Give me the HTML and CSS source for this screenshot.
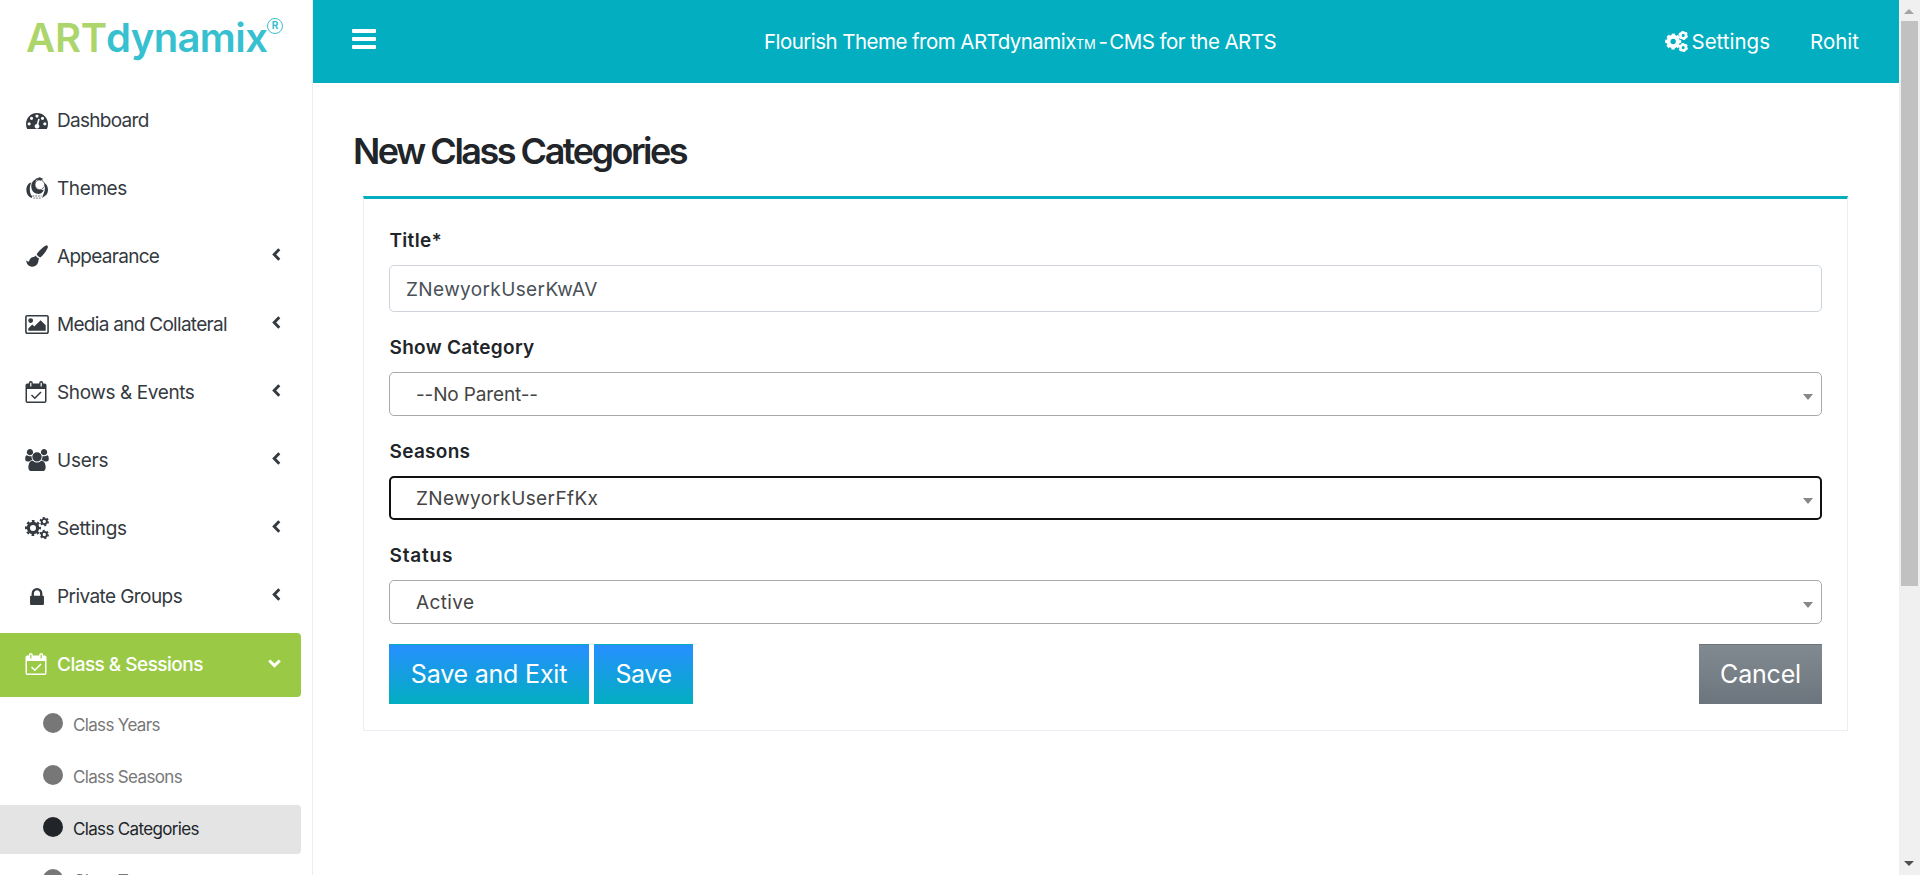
FILE: index.html
```html
<!DOCTYPE html>
<html lang="en">
<head>
<meta charset="utf-8">
<title>New Class Categories</title>
<link rel="stylesheet" href="styles.css">
</head>
<body>
<svg class="defs" width="0" height="0" aria-hidden="true">
  <symbol id="i-dash" viewBox="0 128 1792 1408"><path d="M384 1152q0-53-37.5-90.5t-90.5-37.5-90.5 37.5-37.5 90.5 37.5 90.5 90.5 37.5 90.5-37.5 37.5-90.5zm192-448q0-53-37.5-90.5t-90.5-37.5-90.5 37.5-37.5 90.5 37.5 90.5 90.5 37.5 90.5-37.5 37.5-90.5zm428 481l101-382q6-26-7.5-48.5t-38.5-29.5-48 6.5-30 39.5l-101 382q-60 5-107 43.5t-63 98.5q-20 77 20 146t117 89 146-20 89-117q16-60-6-117t-72-91zm660-33q0-53-37.5-90.5t-90.5-37.5-90.5 37.5-37.5 90.5 37.5 90.5 90.5 37.5 90.5-37.5 37.5-90.5zm-640-640q0-53-37.5-90.5t-90.5-37.5-90.5 37.5-37.5 90.5 37.5 90.5 90.5 37.5 90.5-37.5 37.5-90.5zm448 192q0-53-37.5-90.5t-90.5-37.5-90.5 37.5-37.5 90.5 37.5 90.5 90.5 37.5 90.5-37.5 37.5-90.5zm320 448q0 261-141 483-19 29-54 29h-1402q-35 0-54-29-141-221-141-483 0-182 71-348t191-286 286-191 348-71 348 71 286 191 191 286 71 348z"/></symbol>
  <symbol id="i-theme" viewBox="0 0 24 24"><path d="M6 6C1.500 6.500-.5 12 .8 17c.7 2.700 2.200 4.800 5.200 6l1-1.800C3.800 18.500 3 11 6 6z"/><path d="M5.800 11C5.500 5 9 2.300 13 1.500c-2.500 2-3.500 4.500-3 8s4.500 5.800 9.500 4.300c-1.300 3.500-4.500 5.200-7.500 4.500C8.300 17.700 6 15 5.800 11z"/><path d="M9.500 2.500L15 .3l4 2-3 1.200z"/><circle cx="15" cy="8.500" r="5.300" fill="none" stroke="currentColor" stroke-width=".8"/><path d="M20 6.500c4.500 2 5.200 9.500 2 13.200l-4.500 3.100c1.200-4.300 4.700-8.500 2.500-16.300z"/><path d="M7 20.700h10M8 23h8" fill="none" stroke="currentColor" stroke-width=".8" stroke-dasharray="2 1"/></symbol>
  <symbol id="i-brush" viewBox="0 0 24 24"><path d="M22.300.3c1.500.2 1.900 1.600 1.300 3.100-1.200 3-5 8-8.100 10.300-1-.2-3.500-2.400-3.900-3.500C13.500 7 18 2.500 22.300.3z"/><path d="M10.700 11.500c.5 1.400 2 2.800 3.600 3.200-.6 1-.6 1.700-.8 3-.4 3.400-3.300 6.100-7 5.900-3.800-.2-6-3-6.300-6.700 1 .6 2 1.700 3 1 .7-.7.6-2.500 2.200-3.700 1.900-1.400 3.800-.8 5.300-2.700z"/></symbol>
  <symbol id="i-image" viewBox="-64 128 1920 1536"><path d="M576 576q0 80-56 136t-136 56-136-56-56-136 56-136 136-56 136 56 56 136zm1024 384v448h-1408v-192l320-320 160 160 512-512zm96-704h-1600q-13 0-22.500 9.500t-9.500 22.500v1216q0 13 9.500 22.500t22.500 9.500h1600q13 0 22.500-9.500t9.500-22.500v-1216q0-13-9.500-22.500t-22.500-9.500zm160 32v1216q0 66-47 113t-113 47h-1600q-66 0-113-47t-47-113v-1216q0-66 47-113t113-47h1600q66 0 113 47t47 113z"/></symbol>
  <symbol id="i-cal" viewBox="0 0 21 22"><path fill-rule="evenodd" d="M1.800 2.500H3.300V2a2 2 0 0 1 4 0V2.500h6.400V2a2 2 0 0 1 4 0V2.500h1.500A1.800 1.800 0 0 1 21 4.300V20.200A1.800 1.800 0 0 1 19.200 22H1.800A1.800 1.800 0 0 1 0 20.200V4.300A1.800 1.800 0 0 1 1.800 2.500zM1.500 8V20.500h18V8zM4.700 1.700V5.500h1.200V1.700zM15.100 1.700V5.500h1.200V1.700z"/><path d="M6 14l3.300 3.200L15.500 11" fill="none" stroke="currentColor" stroke-width="1.500"/></symbol>
  <symbol id="i-users" viewBox="64 0 1920 1792"><path d="M657 896q-162 5-265 128h-134q-82 0-138-40.500t-56-118.500q0-353 124-353 6 0 43.500 21t97.500 42.500 119 21.500q67 0 133-23-5 37-5 66 0 139 81 256zm1071 637q0 120-73 189.500t-194 69.500h-874q-121 0-194-69.500t-73-189.500q0-53 3.500-103.500t14-109 26.500-108.500 43-97.500 62-81 85.500-53.500 111.500-20q10 0 43 21.500t73 48 107 48 135 21.500 135-21.500 107-48 73-48 43-21.500q61 0 111.500 20t85.500 53.500 62 81 43 97.500 26.500 108.500 14 109 3.500 103.500zm-1024-1277q0 106-75 181t-181 75-181-75-75-181 75-181 181-75 181 75 75 181zm704 384q0 159-112.500 271.500t-271.500 112.500-271.500-112.500-112.500-271.500 112.500-271.500 271.500-112.500 271.500 112.500 112.500 271.500zm576 225q0 78-56 118.500t-138 40.500h-134q-103-123-265-128 81-117 81-256 0-29-5-66 66 23 133 23 59 0 119-21.500t97.500-42.500 43.500-21q124 0 124 353zm-128-609q0 106-75 181t-181 75-181-75-75-181 75-181 181-75 181 75 75 181z"/></symbol>
  <symbol id="i-gears" viewBox="0 0 24 22"><g fill="none" stroke="currentColor"><circle cx="8" cy="11" r="4.600" stroke-width="3.200"/><circle cx="8" cy="11" r="6.900" stroke-width="2.200" stroke-dasharray="2.710 2.710" stroke-dashoffset="1.350"/><circle cx="19.300" cy="4.500" r="2.600" stroke-width="1.900"/><circle cx="19.300" cy="4.500" r="3.900" stroke-width="1.600" stroke-dasharray="2 2.080"/><circle cx="19.300" cy="17.500" r="2.600" stroke-width="1.900"/><circle cx="19.300" cy="17.500" r="3.900" stroke-width="1.600" stroke-dasharray="2 2.080"/></g></symbol>
  <symbol id="i-gears-bold" viewBox="0 0 24 22"><g fill="none" stroke="currentColor"><circle cx="8.500" cy="11" r="4.900" stroke-width="4.200"/><circle cx="8.500" cy="11" r="7.200" stroke-width="2.400" stroke-dasharray="3.400 2.250" stroke-dashoffset="1.700"/><circle cx="19" cy="4.600" r="2.900" stroke-width="2.600"/><circle cx="19" cy="4.600" r="4.200" stroke-width="1.500" stroke-dasharray="2.500 1.900"/><circle cx="19" cy="17.400" r="2.900" stroke-width="2.600"/><circle cx="19" cy="17.400" r="4.200" stroke-width="1.500" stroke-dasharray="2.500 1.900"/></g></symbol>
  <symbol id="i-lock" viewBox="320 128 1152 1408"><path d="M640 768h512v-192q0-106-75-181t-181-75-181 75-75 181v192zm832 96v576q0 40-28 68t-68 28h-960q-40 0-68-28t-28-68v-576q0-40 28-68t68-28h32v-192q0-184 132-316t316-132 316 132 132 316v192h32q40 0 68 28t28 68z"/></symbol>
  <symbol id="i-left" viewBox="0 0 9 13"><path d="M7.300 1.300L2.200 6.500l5.100 5.200" fill="none" stroke="currentColor" stroke-width="2.900"/></symbol>
  <symbol id="i-down" viewBox="0 0 13 9"><path d="M1.200 1.500L6.500 6.600l5.300-5.100" fill="none" stroke="currentColor" stroke-width="3"/></symbol>
</svg>
<div class="app">
  <aside class="sidebar">
    <div class="logo"><span class="logo-art">ART</span><span class="logo-dyn">dynamix</span><span class="logo-reg">R</span></div>
    <nav class="nav">
      <a class="item"><span class="ico"><svg class="idash"><use href="#i-dash"/></svg></span><span class="text tight">Dashboard</span></a>
      <a class="item"><span class="ico"><svg class="itheme"><use href="#i-theme"/></svg></span><span class="text">Themes</span></a>
      <a class="item"><span class="ico"><svg class="ibrush"><use href="#i-brush"/></svg></span><span class="text tight">Appearance</span><svg class="chev"><use href="#i-left"/></svg></a>
      <a class="item"><span class="ico"><svg class="iimg"><use href="#i-image"/></svg></span><span class="text tight">Media and Collateral</span><svg class="chev"><use href="#i-left"/></svg></a>
      <a class="item"><span class="ico start"><svg class="ical"><use href="#i-cal"/></svg></span><span class="text">Shows &amp; Events</span><svg class="chev"><use href="#i-left"/></svg></a>
      <a class="item"><span class="ico"><svg class="iusers"><use href="#i-users"/></svg></span><span class="text loose">Users</span><svg class="chev"><use href="#i-left"/></svg></a>
      <a class="item"><span class="ico"><svg class="igears"><use href="#i-gears"/></svg></span><span class="text">Settings</span><svg class="chev"><use href="#i-left"/></svg></a>
      <a class="item"><span class="ico"><svg class="ilock"><use href="#i-lock"/></svg></span><span class="text mid">Private Groups</span><svg class="chev"><use href="#i-left"/></svg></a>
      <a class="item active"><span class="ico start"><svg class="ical"><use href="#i-cal"/></svg></span><span class="text">Class &amp; Sessions</span><svg class="chev down"><use href="#i-down"/></svg></a>
      <div class="sub">
        <a class="subitem"><i class="dot"></i><span>Class Years</span></a>
        <a class="subitem"><i class="dot"></i><span>Class Seasons</span></a>
        <a class="subitem current"><i class="dot"></i><span>Class Categories</span></a>
        <a class="subitem"><i class="dot"></i><span>Class Types</span></a>
      </div>
    </nav>
  </aside>
  <div class="page">
    <header class="topbar">
      <button class="burger" aria-label="Menu"><i></i><i></i><i></i></button>
      <div class="tagline">Flourish Theme from ARTdynamix<small>TM</small><span class="dash">-</span>CMS for the ARTS</div>
      <div class="userbar"><svg class="topgears"><use href="#i-gears-bold"/></svg><span>Settings</span><span class="user">Rohit</span></div>
    </header>
    <main class="main">
      <h1>New Class Categories</h1>
      <form class="card">
        <label>Title*</label>
        <div class="field input">ZNewyorkUserKwAV</div>
        <label>Show Category</label>
        <div class="field select parent">--No Parent--</div>
        <label>Seasons</label>
        <div class="field select focus">ZNewyorkUserFfKx</div>
        <label class="status">Status</label>
        <div class="field select">Active</div>
        <div class="actions">
          <button type="button" class="btn wide">Save and Exit</button>
          <button type="button" class="btn short">Save</button>
          <button type="button" class="btn cancel">Cancel</button>
        </div>
      </form>
    </main>
  </div>
  <div class="scroll"><i class="up"></i><i class="thumb"></i><i class="dn"></i></div>
</div>
</body>
</html>
```
FILE: styles.css
```css
* { box-sizing: border-box; }
body { margin: 0; height: 875px; overflow: hidden; background: #fff; color: #212529; font-family: Inter, "Liberation Sans", sans-serif; }
svg { display: block; fill: currentColor; }
.defs { position: absolute; }
.app { display: flex; height: 875px; }
.sidebar { width: 313px; flex: none; border-right: 1px solid #ececf4; overflow: hidden; }
.logo { height: 89px; padding: 13px 0 0 26px; display: flex; align-items: flex-start; font-size: 40px; line-height: 50px; font-weight: 600; }
.logo-art { color: #acd66b; width: 80px; letter-spacing: -0.2px; }
.logo-dyn { color: #37c0cf; width: 161px; letter-spacing: -0.6px; }
.logo-reg { color: #37c0cf; border: 1.5px solid #37c0cf; border-radius: 50%; width: 16px; height: 16px; margin-top: 5px; font-size: 10px; font-weight: 700; line-height: 13px; text-align: center; }
.item { display: flex; align-items: center; width: 301px; height: 64px; margin-bottom: 4px; padding: 0 20px 2px 25px; border-radius: 0 4px 4px 0; color: #343a40; font-size: 19px; letter-spacing: -0.4px; }
.ico { display: flex; justify-content: center; flex: none; width: 24px; margin-right: 8px; }
.ico.start { justify-content: flex-start; }
.text.tight { letter-spacing: -0.71px; }
.text.mid { letter-spacing: -0.58px; }
.text.loose { letter-spacing: -0.25px; }
.idash { width: 22px; height: 18px; }
.itheme, .ibrush { width: 22px; height: 22px; }
.iimg { width: 24px; height: 19px; }
.ical { width: 22px; height: 22px; }
.iusers, .igears { width: 24px; height: 22px; }
.ilock { width: 14px; height: 17px; }
.chev { width: 9px; height: 13px; margin: 0 0 3px auto; }
.chev.down { width: 13px; height: 9px; margin-bottom: 2px; }
.item.active { background: #9aca45; color: #fff; font-weight: 500; letter-spacing: -0.53px; }
.subitem { display: flex; align-items: center; width: 301px; height: 49px; margin-bottom: 3px; padding: 0 0 2px 43px; border-radius: 0 4px 4px 0; color: #777; font-size: 17px; letter-spacing: -0.66px; }
.subitem.current { background: #e4e4e4; color: #212529; }
.dot { width: 20px; height: 20px; border-radius: 50%; background: currentColor; margin: 0 10px 4px 0; }
.page { flex: 1; min-width: 0; }
.topbar { display: flex; align-items: center; height: 83px; padding: 0 40px 0 39px; background: #02aec0; color: #fff; font-size: 20.5px; letter-spacing: 0; }
.burger { display: flex; flex-direction: column; gap: 4px; padding: 0; margin-bottom: 5px; border: 0; background: none; }
.burger i { width: 24px; height: 4px; border-radius: 1px; background: #fff; }
.tagline { margin-left: 388px; white-space: nowrap; letter-spacing: -0.54px; }
.tagline small { font-size: 13px; letter-spacing: -0.3px; }
.dash { margin: 0 2px 0 3px; }
.userbar { margin-left: auto; display: flex; align-items: center; }
.topgears { width: 23px; height: 21px; margin-right: 4px; }
.user { margin-left: 40px; }
.main { padding: 44px 51px 0 40px; }
h1 { margin: 0 0 22px; height: 47px; line-height: 49px; font-size: 36px; font-weight: 600; letter-spacing: -2.5px; }
.card { height: 535px; margin-left: 10px; padding: 27px 25px 0; border: 1px solid #ececf4; border-top: 3px solid #02aec0; }
label { display: block; height: 39px; line-height: 30px; font-size: 19px; font-weight: 600; letter-spacing: 0.3px; text-indent: 0.5px; }
.status { letter-spacing: 0.8px; }
.field { height: 44px; margin-bottom: 21px; border: 1px solid #aaa; border-radius: 5px; display: flex; align-items: center; padding: 0 8px 0 26px; font-size: 19px; letter-spacing: 0.38px; color: #444; }
.input { height: 47px; border-color: #ced4da; padding: 2px 0 0 16px; color: #495057; }
.parent { letter-spacing: -0.15px; }
.select::after { content: ""; margin: 5px 0 0 auto; border: 5px solid transparent; border-top: 6px solid #888; border-bottom: 0; }
.focus { border: 2px solid #111; padding: 0 7px 0 25px; }
.actions { display: flex; gap: 5px; margin-top: -1px; }
.btn { height: 60px; border: 0; border-top: 1px solid #02aec0; color: #fff; font: 25px Inter, sans-serif; letter-spacing: -0.2px; background: linear-gradient(#268fff, #02aec0); padding: 0 0 1px; }
.wide { width: 200px; }
.short { width: 99px; letter-spacing: -0.4px; }
.cancel { width: 123px; margin-left: auto; border-color: #6c757d; background: linear-gradient(#828a91, #6c757d); }
.scroll { display: flex; flex-direction: column; align-items: center; width: 21px; background: #f0f0f0; padding: 9px 1px 9px 0; }
.up, .dn { border: 5px solid transparent; }
.up { border-top: 0; border-bottom-color: #a3a3a3; }
.thumb { width: 17px; height: 565px; margin-top: 7px; background: #c1c1c1; }
.dn { border-bottom: 0; border-top-color: #505050; margin-top: auto; }
```
